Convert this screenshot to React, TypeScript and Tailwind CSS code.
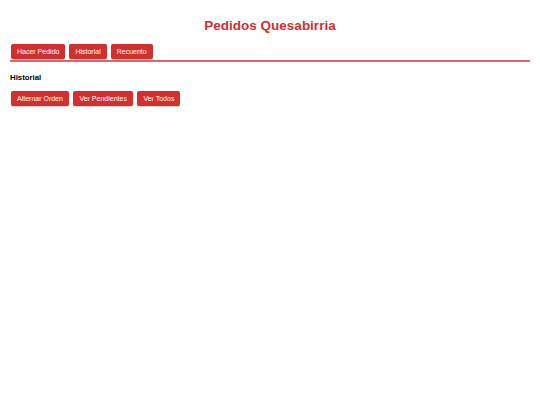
import { useState } from 'react';

const tabs = ['Hacer Pedido', 'Historial', 'Recuento'];
const actions = ['Alternar Orden', 'Ver Pendientes', 'Ver Todos'];

function RedButton({ label, onClick }: { label: string; onClick?: () => void }) {
  return (
    <button
      onClick={onClick}
      className="h-[15px] px-[6px] flex items-center bg-[#d32f2f] text-white text-[7px] leading-none rounded-[2px] shadow-[0_0.5px_1px_rgba(0,0,0,0.2)]"
    >
      {label}
    </button>
  );
}

export default function App() {
  const [tab, setTab] = useState('Historial');

  return (
    <div className="min-h-[405px] bg-white px-[10px] font-['Liberation_Sans',Arial,sans-serif]">
      <h1 className="pt-[18px] text-center text-[13.5px] leading-[16px] font-bold text-[#d32f2f]">
        Pedidos Quesabirria
      </h1>

      <nav className="mt-[10px] flex gap-[4px] pl-[1px]">
        {tabs.map((t) => (
          <RedButton key={t} label={t} onClick={() => setTab(t)} />
        ))}
      </nav>
      <div className="mt-[1px] h-[2px] bg-[#d96a6a]" />

      <h2 className="mt-[11px] text-[7.8px] leading-[10px] font-bold text-black">{tab}</h2>

      <div className="mt-[8px] flex gap-[4.5px] pl-[1px]">
        {actions.map((a) => (
          <RedButton key={a} label={a} />
        ))}
      </div>
    </div>
  );
}
